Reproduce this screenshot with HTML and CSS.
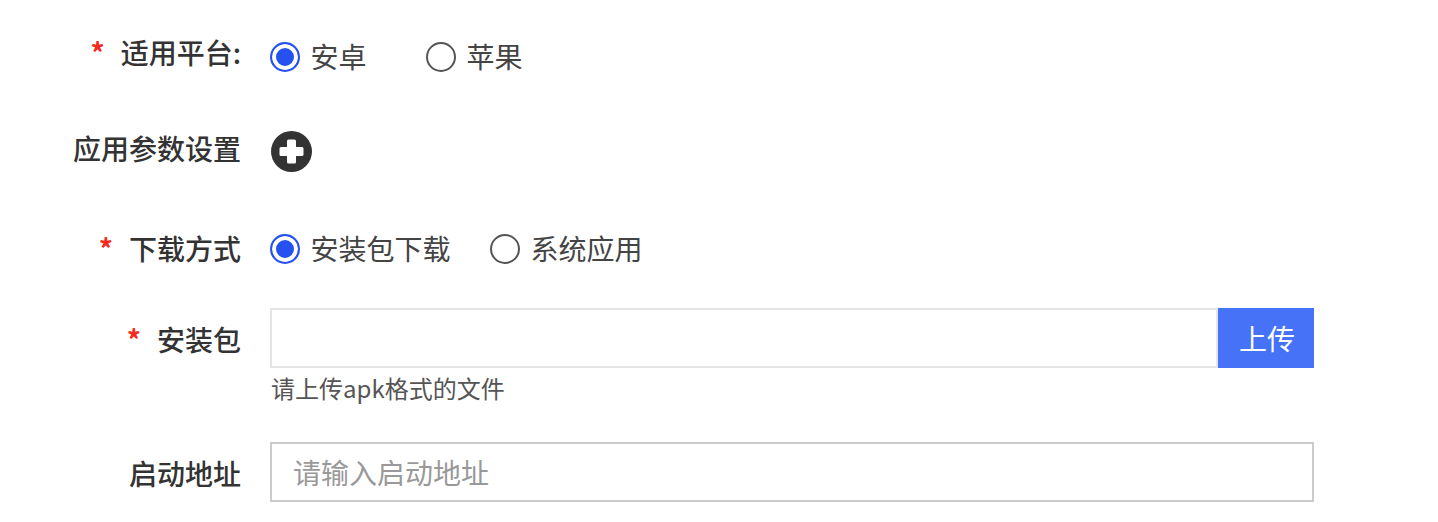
FILE: index.html
```html
<!DOCTYPE html>
<html lang="zh-CN">
<head>
  <meta charset="UTF-8">
  <meta name="viewport" content="width=device-width, initial-scale=1">
  <title>应用设置</title>
  <link rel="stylesheet" href="styles.css">
</head>
<body>

<form class="form">

  <div class="row row-platform">
    <label class="label label-platform required">适用平台:</label>
    <div class="field radios radios-wide">
      <label class="radio"><span class="dot checked"></span><span class="radio-text">安卓</span></label>
      <label class="radio"><span class="dot"></span><span class="radio-text">苹果</span></label>
    </div>
  </div>

  <div class="row row-params">
    <label class="label label-params">应用参数设置</label>
    <div class="field">
      <svg class="add-icon" width="41" height="41" viewBox="0 0 41 41">
        <circle cx="20.5" cy="20.5" r="20.5" fill="#333"/>
        <path d="M17.500 8.500h6a1.500 1.500 0 0 1 1.500 1.500v6h6a1.500 1.500 0 0 1 1.500 1.500v6a1.500 1.500 0 0 1-1.500 1.500h-6v6a1.500 1.500 0 0 1-1.500 1.500h-6a1.500 1.500 0 0 1-1.500-1.500v-6h-6a1.500 1.500 0 0 1-1.500-1.500v-6a1.500 1.500 0 0 1 1.500-1.500h6v-6a1.500 1.500 0 0 1 1.500-1.500z" fill="#fff"/>
      </svg>
    </div>
  </div>

  <div class="row row-download">
    <label class="label label-download required">下载方式</label>
    <div class="field radios">
      <label class="radio"><span class="dot checked"></span><span class="radio-text">安装包下载</span></label>
      <label class="radio"><span class="dot"></span><span class="radio-text">系统应用</span></label>
    </div>
  </div>

  <div class="row row-package">
    <label class="label label-low required">安装包</label>
    <div class="field upload">
      <input class="input input-light" type="text">
      <button class="upload-btn" type="button">上传</button>
    </div>
  </div>
  <p class="hint">请上传apk格式的文件</p>

  <div class="row">
    <label class="label label-low">启动地址</label>
    <div class="field">
      <input class="input" type="text" placeholder="请输入启动地址">
    </div>
  </div>

</form>

</body>
</html>
```

FILE: styles.css
```css
* {
  box-sizing: border-box;
}
body {
  margin: 0;
  background-color: #fff;
  color: #333;
  font-family: "Noto Sans CJK SC", "Noto Sans", sans-serif;
  font-size: 28px;
  overflow: hidden;
}
.form {
  padding-top: 27px;
  width: 1314px;
}
.row {
  display: flex;
  align-items: center;
  height: 60px;
}
.row-platform {
  margin-bottom: 34px;
}
.row-params {
  margin-bottom: 38px;
}
.row-download {
  margin-bottom: 29px;
}
.label {
  width: 241px;
  flex-shrink: 0;
  text-align: right;
  font-weight: 500;
  line-height: 40px;
  position: relative;
}
.label-platform {
  top: -5px;
}
.label-params {
  top: -3px;
}
.label-download {
  top: -1px;
}
.label-low {
  top: 1px;
}
.required::before {
  content: "*";
  color: #f5291c;
  font-size: 28px;
  font-weight: 700;
  margin-right: 16px;
}
.field {
  flex: 1;
  margin-left: 29px;
  display: flex;
  align-items: center;
}
.radios {
  gap: 39.5px;
}
.radios-wide {
  gap: 59.5px;
}
.radio {
  display: flex;
  align-items: center;
  gap: 10.5px;
  color: #444;
}
.radio-text {
  margin-top: -3px;
}
.dot {
  width: 30px;
  height: 30px;
  border: 2px solid #555;
  border-radius: 50%;
  background-color: #fff;
}
.dot.checked {
  border-color: #2451f0;
  background-color: #2451f0;
  box-shadow: inset 0 0 0 4px #fff;
}
.add-icon {
  display: block;
  margin-left: 1px;
}
.input {
  width: 100%;
  height: 60px;
  padding: 0 21px;
  border: 2px solid #ccc;
  border-radius: 0;
  outline: none;
  background-color: #fff;
  font: inherit;
  color: #333;
}
.input::placeholder {
  color: #999;
}
.input-light {
  border-color: #e5e5e5;
}
.upload-btn {
  width: 96px;
  height: 60px;
  flex-shrink: 0;
  border: none;
  background-color: #4672f8;
  color: #fff;
  font: inherit;
  padding: 0 0 0 2px;
}
.hint {
  margin: 0 0 38px 271px;
  height: 36px;
  line-height: 40px;
  font-size: 24px;
  color: #555;
}
```
